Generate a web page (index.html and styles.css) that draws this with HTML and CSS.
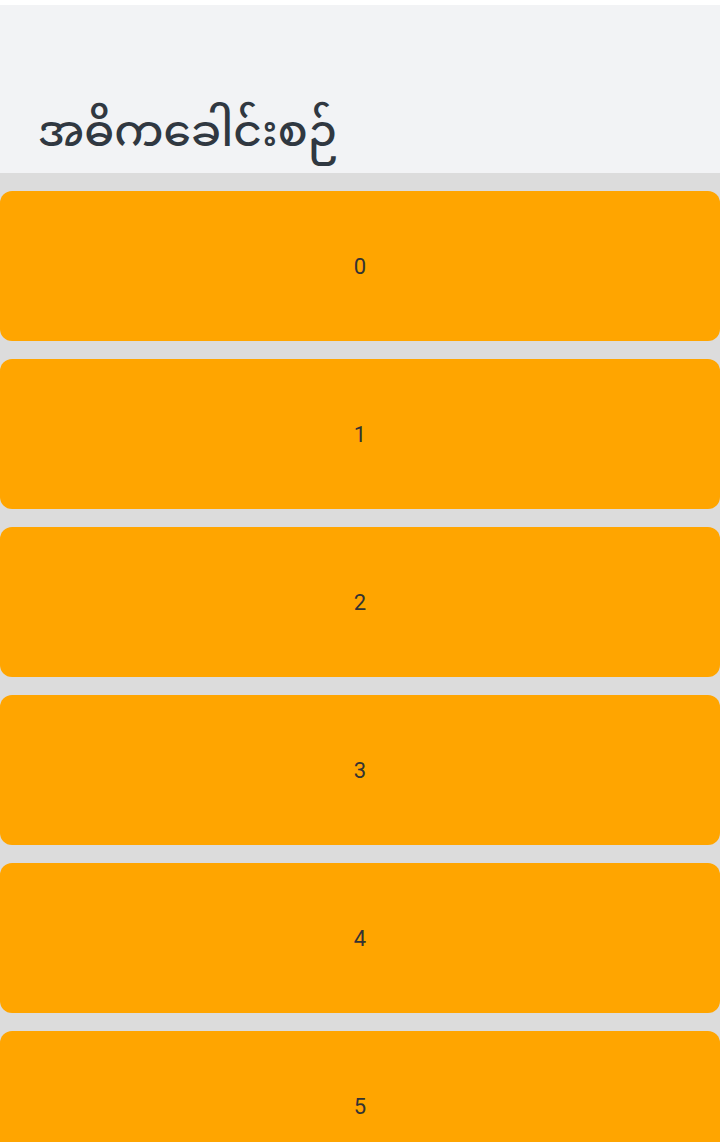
FILE: index.html
```html
<!DOCTYPE html>
<html lang="my">
<head>
<meta charset="utf-8">
<link rel="stylesheet" href="styles.css">
</head>
<body>
<div class="top-strip"></div>
<header class="header">
  <h1 class="title">အဓိကခေါင်းစဉ်</h1>
</header>
<main class="list">
  <div class="card">0</div>
  <div class="card">1</div>
  <div class="card">2</div>
  <div class="card">3</div>
  <div class="card">4</div>
  <div class="card">5</div>
</main>
</body>
</html>
```
FILE: styles.css
```css
html, body {
  margin: 0;
  padding: 0;
  background: #dcdcdc;
  font-family: Roboto, "Noto Sans Myanmar", "Noto Sans", sans-serif;
}
.top-strip {
  height: 5px;
  background: #ffffff;
}
.header {
  height: 168px;
  background: #f2f3f5;
  display: flex;
  align-items: flex-end;
  box-sizing: border-box;
  padding: 0 0 0 38px;
}
.title {
  margin: 0;
  font-family: "Noto Sans Myanmar", "Padauk", "Noto Sans", sans-serif;
  font-size: 44px;
  font-weight: 500;
  color: #303841;
  line-height: 1;
  padding-bottom: 15px;
}
.list {
  display: flex;
  flex-direction: column;
  gap: 18px;
  padding-top: 18px;
}
.card {
  height: 150px;
  flex: 0 0 150px;
  background: #ffa500;
  border-radius: 12px;
  display: flex;
  align-items: center;
  justify-content: center;
  font-size: 22px;
  color: #333333;
}
```
